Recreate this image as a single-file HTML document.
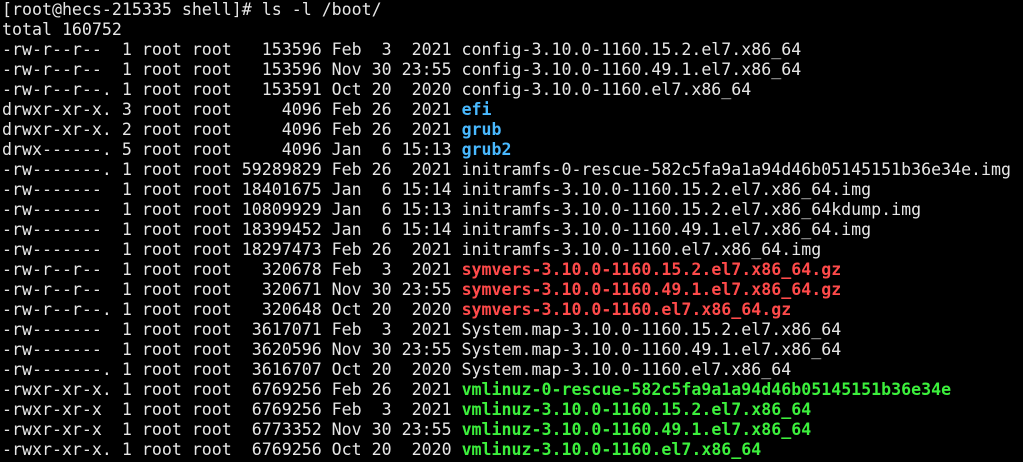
<!DOCTYPE html>
<html><head><meta charset="utf-8"><style>
html,body{margin:0;padding:0;background:#000;width:1023px;height:462px;overflow:hidden}
pre{margin:0;padding:0 0 0 2px;font-family:"DejaVu Sans Mono","Liberation Mono",monospace;font-size:16.6px;line-height:20px;color:#e6e6e6;white-space:pre}
.b{color:#49b9ff;font-weight:bold}.r{color:#ff4a4a;font-weight:bold}.g{color:#3cf03c;font-weight:bold}
</style></head><body><pre>[root@hecs-215335 shell]# ls -l /boot/
total 160752
-rw-r--r--  1 root root   153596 Feb  3  2021 config-3.10.0-1160.15.2.el7.x86_64
-rw-r--r--  1 root root   153596 Nov 30 23:55 config-3.10.0-1160.49.1.el7.x86_64
-rw-r--r--. 1 root root   153591 Oct 20  2020 config-3.10.0-1160.el7.x86_64
drwxr-xr-x. 3 root root     4096 Feb 26  2021 <span class="b">efi</span>
drwxr-xr-x. 2 root root     4096 Feb 26  2021 <span class="b">grub</span>
drwx------. 5 root root     4096 Jan  6 15:13 <span class="b">grub2</span>
-rw-------. 1 root root 59289829 Feb 26  2021 initramfs-0-rescue-582c5fa9a1a94d46b05145151b36e34e.img
-rw-------  1 root root 18401675 Jan  6 15:14 initramfs-3.10.0-1160.15.2.el7.x86_64.img
-rw-------  1 root root 10809929 Jan  6 15:13 initramfs-3.10.0-1160.15.2.el7.x86_64kdump.img
-rw-------  1 root root 18399452 Jan  6 15:14 initramfs-3.10.0-1160.49.1.el7.x86_64.img
-rw-------  1 root root 18297473 Feb 26  2021 initramfs-3.10.0-1160.el7.x86_64.img
-rw-r--r--  1 root root   320678 Feb  3  2021 <span class="r">symvers-3.10.0-1160.15.2.el7.x86_64.gz</span>
-rw-r--r--  1 root root   320671 Nov 30 23:55 <span class="r">symvers-3.10.0-1160.49.1.el7.x86_64.gz</span>
-rw-r--r--. 1 root root   320648 Oct 20  2020 <span class="r">symvers-3.10.0-1160.el7.x86_64.gz</span>
-rw-------  1 root root  3617071 Feb  3  2021 System.map-3.10.0-1160.15.2.el7.x86_64
-rw-------  1 root root  3620596 Nov 30 23:55 System.map-3.10.0-1160.49.1.el7.x86_64
-rw-------. 1 root root  3616707 Oct 20  2020 System.map-3.10.0-1160.el7.x86_64
-rwxr-xr-x. 1 root root  6769256 Feb 26  2021 <span class="g">vmlinuz-0-rescue-582c5fa9a1a94d46b05145151b36e34e</span>
-rwxr-xr-x  1 root root  6769256 Feb  3  2021 <span class="g">vmlinuz-3.10.0-1160.15.2.el7.x86_64</span>
-rwxr-xr-x  1 root root  6773352 Nov 30 23:55 <span class="g">vmlinuz-3.10.0-1160.49.1.el7.x86_64</span>
-rwxr-xr-x. 1 root root  6769256 Oct 20  2020 <span class="g">vmlinuz-3.10.0-1160.el7.x86_64</span></pre></body></html>
